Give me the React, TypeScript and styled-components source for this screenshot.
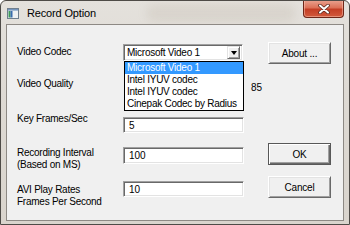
import React from 'react'
import styled, { createGlobalStyle } from 'styled-components'

const GlobalStyle = createGlobalStyle`
  html, body {
    margin: 0;
    padding: 0;
    background: #ffffff;
  }
  body {
    font-family: 'Liberation Sans', Arial, sans-serif;
  }
`

const Window = styled.div`
  position: relative;
  width: 350px;
  height: 225px;
  box-sizing: border-box;
  display: flex;
  flex-direction: column;
  padding: 0 5px 3px 5px;
  border: 1px solid #4e4b47;
  border-radius: 6px 6px 0 0;
  overflow: hidden;
  background: linear-gradient(180deg, #e4e1dc 0%, #dedad4 40%, #d9d4cd 100%);
`

const TitleBar = styled.div`
  position: relative;
  height: 23px;
  display: flex;
  align-items: flex-start;
  padding-left: 1px;
`

const TitleIcon = styled.svg`
  margin-top: 7px;
  flex: none;
`

const Title = styled.span`
  margin: 5px 0 0 8px;
  font-size: 11px;
  line-height: 14px;
  letter-spacing: -0.15px;
  color: #000;
`

const TitleGlow = styled.div`
  position: absolute;
  left: 140px;
  top: 3px;
  width: 150px;
  height: 18px;
  border-radius: 9px;
  background: rgba(150, 130, 110, 0.12);
  filter: blur(4px);
  pointer-events: none;
`

const CloseButton = styled.div`
  margin: -1px 0 0 auto;
  width: 41px;
  height: 18px;
  box-sizing: border-box;
  display: flex;
  align-items: center;
  justify-content: center;
  border: 1px solid #6e2618;
  border-top: none;
  border-radius: 0 0 4px 4px;
  background: linear-gradient(180deg, #eaa492 0%, #dc7158 45%, #c43e25 55%, #d25a3c 100%);
  box-shadow: inset 0 0 0 1px rgba(255, 210, 195, 0.45);
`

const Client = styled.div`
  position: relative;
  flex: 1;
  display: flex;
  border: 1px solid #8d8984;
  background: #f0f0f0;
  padding-left: 10px;
`

const Form = styled.div`
  display: grid;
  grid-template-columns: 106px 121px auto;
  grid-template-rows: 34px 35px 34px 34px auto;
  padding-top: 19px;
`

const Label = styled.div<{ $top?: number }>`
  grid-column: 1;
  margin-top: ${({ $top }) => $top ?? 0}px;
  font-size: 10px;
  line-height: 12px;
  letter-spacing: -0.25px;
  color: #000;
`

const Value = styled.div<{ $top?: number }>`
  grid-column: 3;
  margin: ${({ $top }) => $top ?? 0}px 0 0 7px;
  font-size: 10px;
  line-height: 12px;
  color: #000;
`

const sunken = `
  box-sizing: border-box;
  border: 1px solid;
  border-color: #a0a0a0 #ffffff #ffffff #a0a0a0;
  box-shadow: inset 1px 1px #696969, inset -1px -1px #e3e3e3;
  background: #ffffff;
`

const Field = styled.div<{ $top?: number; $h: number }>`
  ${sunken}
  grid-column: 2;
  margin-top: ${({ $top }) => $top ?? 0}px;
  height: ${({ $h }) => $h}px;
  padding: 2px 0 0 5px;
  font-size: 10px;
  line-height: 12px;
  color: #000;
`

const Combo = styled.div`
  ${sunken}
  position: relative;
  grid-column: 2;
  width: 120px;
  height: 17px;
  display: flex;
  align-items: center;
  padding: 0 2px 0 3px;
  font-size: 10px;
  letter-spacing: -0.25px;
  color: #000;
`

const ComboText = styled.span`
  flex: 1;
  white-space: nowrap;
`

const ArrowButton = styled.div`
  width: 13px;
  height: 13px;
  box-sizing: border-box;
  display: flex;
  align-items: center;
  justify-content: center;
  background: #f0f0f0;
  border: 1px solid;
  border-color: #e3e3e3 #696969 #696969 #e3e3e3;
  box-shadow: inset 1px 1px #ffffff, inset -1px -1px #a0a0a0;
`

const Arrow = styled.div`
  width: 0;
  height: 0;
  border-left: 3.5px solid transparent;
  border-right: 3.5px solid transparent;
  border-top: 4px solid #000;
`

const DropList = styled.ul`
  position: absolute;
  z-index: 2;
  top: calc(100% + 1px);
  left: 0;
  width: 120px;
  margin: 0;
  padding: 0;
  list-style: none;
  box-sizing: border-box;
  border: 1px solid #000;
  background: #ffffff;
`

const DropItem = styled.li<{ $selected?: boolean }>`
  height: 12px;
  padding-left: 2px;
  font-size: 10px;
  line-height: 12px;
  letter-spacing: -0.25px;
  white-space: nowrap;
  color: ${({ $selected }) => ($selected ? '#ffffff' : '#000000')};
  background: ${({ $selected }) => ($selected ? '#3399ff' : 'transparent')};
`

const Buttons = styled.div`
  margin-left: auto;
  padding: 17px 12px 0 0;
  display: flex;
  flex-direction: column;
`

const Button = styled.div<{ $top?: number; $default?: boolean }>`
  width: 63px;
  height: 22px;
  box-sizing: border-box;
  margin-top: ${({ $top }) => $top ?? 0}px;
  display: flex;
  align-items: center;
  justify-content: center;
  font-size: 10px;
  letter-spacing: -0.2px;
  color: #000;
  background: #f0f0f0;
  border: 1px solid;
  border-color: ${({ $default }) =>
    $default ? '#585858' : '#ffffff #696969 #696969 #ffffff'};
  box-shadow: ${({ $default }) =>
    $default
      ? 'inset 1px 1px #ffffff, inset -1px -1px #696969, inset -2px -2px #a0a0a0'
      : 'inset 1px 1px #e3e3e3, inset -1px -1px #a0a0a0'};
`

const codecs = ['Microsoft Video 1', 'Intel IYUV codec', 'Intel IYUV codec', 'Cinepak Codec by Radius']

export default function App() {
  return (
    <>
      <GlobalStyle />
      <Window>
        <TitleBar>
          <TitleIcon width="12" height="11" viewBox="0 0 12 11">
            <rect x="0.5" y="0.5" width="11" height="10" fill="#eef1f3" stroke="#6f7f8e" />
            <rect x="1" y="1" width="10" height="1.6" fill="#7596bf" />
            <rect x="1.5" y="3" width="2" height="6.5" fill="#3d9a5c" />
            <rect x="3.5" y="3" width="2" height="6.5" fill="#3a6cae" />
          </TitleIcon>
          <Title>Record Option</Title>
          <TitleGlow />
          <CloseButton>
            <svg width="12" height="10" viewBox="0 0 12 10">
              <path d="M2 1.5 L10 8.5 M10 1.5 L2 8.5" stroke="#5a2a20" strokeWidth="3.6" strokeLinecap="round" />
              <path d="M2 1.5 L10 8.5 M10 1.5 L2 8.5" stroke="#ffffff" strokeWidth="2" strokeLinecap="round" />
            </svg>
          </CloseButton>
        </TitleBar>
        <Client>
          <Form>
            <Label $top={2}>Video Codec</Label>
            <Combo>
              <ComboText>Microsoft Video 1</ComboText>
              <ArrowButton>
                <Arrow />
              </ArrowButton>
              <DropList>
                {codecs.map((c, i) => (
                  <DropItem key={i} $selected={i === 0}>
                    {c}
                  </DropItem>
                ))}
              </DropList>
            </Combo>

            <Label>Video Quality</Label>
            <div />
            <Value $top={4}>85</Value>

            <Label>Key Frames/Sec</Label>
            <Field $top={4} $h={16}>5</Field>
            <div />

            <Label>
              Recording Interval
              <br />
              (Based on MS)
            </Label>
            <Field $h={17}>100</Field>
            <div />

            <Label $top={3}>
              AVI Play Rates
              <br />
              Frames Per Second
            </Label>
            <Field $h={16}>10</Field>
          </Form>
          <Buttons>
            <Button>About ...</Button>
            <Button $top={79} $default>
              OK
            </Button>
            <Button $top={11}>Cancel</Button>
          </Buttons>
        </Client>
      </Window>
    </>
  )
}
